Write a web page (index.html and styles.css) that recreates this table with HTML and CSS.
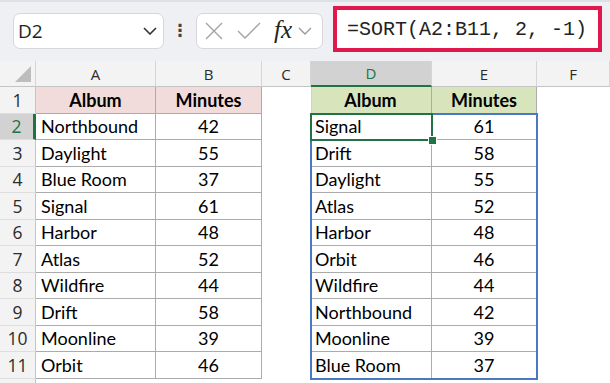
FILE: index.html
```html
<!DOCTYPE html>
<html>
<head>
<meta charset="utf-8">
<link rel="stylesheet" href="styles.css">
</head>
<body>
<div class="app">
  <div class="toolbar">
    <div class="namebox">
      <span class="nb-text">D2</span>
      <svg class="chev" width="14" height="8" viewBox="0 0 14 8"><polyline points="1,1 7,7 13,1" fill="none" stroke="#333" stroke-width="1.6"/></svg>
    </div>
    <div class="sep">⋮</div>
    <div class="fxbox">
      <svg class="ico" width="20" height="20" viewBox="0 0 20 20"><path d="M2 2 L18 18 M18 2 L2 18" stroke="#a3a3a3" stroke-width="1.4" fill="none"/></svg>
      <svg class="ico" width="24" height="20" viewBox="0 0 24 20"><polyline points="1,10 8,17 23,2" stroke="#a3a3a3" stroke-width="1.4" fill="none"/></svg>
      <span class="fx">fx</span>
      <svg class="chev2" width="14" height="8" viewBox="0 0 14 8"><polyline points="1,1 7,7 13,1" fill="none" stroke="#999" stroke-width="1.4"/></svg>
    </div>
    <div class="formula">=SORT(A2:B11, 2, -1)</div>
  </div>

  <div class="grid">
    <div class="ch corner"><span class="tri"></span></div>
    <div class="ch">A</div>
    <div class="ch">B</div>
    <div class="ch">C</div>
    <div class="ch sel">D</div>
    <div class="ch">E</div>
    <div class="ch">F</div>

    <div class="rh">1</div>
    <div class="c t hd pink">Album</div>
    <div class="c t hd pink">Minutes</div>
    <div class="c"></div>
    <div class="c t hd green dl">Album</div>
    <div class="c t hd green">Minutes</div>
    <div class="c"></div>

    <div class="rh sel">2</div>
    <div class="c t">Northbound</div>
    <div class="c t num">42</div>
    <div class="c"></div>
    <div class="c t dl">Signal</div>
    <div class="c t num">61</div>
    <div class="c"></div>

    <div class="rh">3</div>
    <div class="c t">Daylight</div>
    <div class="c t num">55</div>
    <div class="c"></div>
    <div class="c t dl">Drift</div>
    <div class="c t num">58</div>
    <div class="c"></div>

    <div class="rh">4</div>
    <div class="c t">Blue Room</div>
    <div class="c t num">37</div>
    <div class="c"></div>
    <div class="c t dl">Daylight</div>
    <div class="c t num">55</div>
    <div class="c"></div>

    <div class="rh">5</div>
    <div class="c t">Signal</div>
    <div class="c t num">61</div>
    <div class="c"></div>
    <div class="c t dl">Atlas</div>
    <div class="c t num">52</div>
    <div class="c"></div>

    <div class="rh">6</div>
    <div class="c t">Harbor</div>
    <div class="c t num">48</div>
    <div class="c"></div>
    <div class="c t dl">Harbor</div>
    <div class="c t num">48</div>
    <div class="c"></div>

    <div class="rh">7</div>
    <div class="c t">Atlas</div>
    <div class="c t num">52</div>
    <div class="c"></div>
    <div class="c t dl">Orbit</div>
    <div class="c t num">46</div>
    <div class="c"></div>

    <div class="rh">8</div>
    <div class="c t">Wildfire</div>
    <div class="c t num">44</div>
    <div class="c"></div>
    <div class="c t dl">Wildfire</div>
    <div class="c t num">44</div>
    <div class="c"></div>

    <div class="rh">9</div>
    <div class="c t">Drift</div>
    <div class="c t num">58</div>
    <div class="c"></div>
    <div class="c t dl">Northbound</div>
    <div class="c t num">42</div>
    <div class="c"></div>

    <div class="rh">10</div>
    <div class="c t">Moonline</div>
    <div class="c t num">39</div>
    <div class="c"></div>
    <div class="c t dl">Moonline</div>
    <div class="c t num">39</div>
    <div class="c"></div>

    <div class="rh">11</div>
    <div class="c t">Orbit</div>
    <div class="c t num">46</div>
    <div class="c"></div>
    <div class="c t dl">Blue Room</div>
    <div class="c t num">37</div>
    <div class="c"></div>

    <div class="rh last"></div>
    <div class="c rest"></div>

    <div class="spill"></div>
    <div class="active"><span class="handle"></span></div>
  </div>
</div>
</body>
</html>
```

FILE: styles.css
```css
html, body {
  margin: 0;
  padding: 0;
  background: #ffffff;
}
.app {
  width: 610px;
  height: 383px;
  overflow: hidden;
}
.toolbar {
  box-sizing: border-box;
  height: 61px;
  background: #eef0f4;
  border-top: 2px solid #dde0e5;
  display: flex;
  align-items: flex-start;
  padding-left: 13px;
}
.namebox {
  box-sizing: border-box;
  margin-top: 11px;
  width: 151px;
  height: 36px;
  background: #fff;
  border: 1px solid #d5d7da;
  border-radius: 7px;
  display: flex;
  align-items: center;
  justify-content: space-between;
  padding: 0 6px 0 4px;
}
.nb-text {
  font-family: "Open Sans", "Noto Sans", sans-serif;
  font-size: 19px;
  color: #222;
}
.sep {
  width: 32px;
  margin-top: 17px;
  text-align: center;
  font-family: "DejaVu Sans", sans-serif;
  font-size: 17px;
  line-height: 22px;
  color: #444;
  font-weight: bold;
}
.fxbox {
  box-sizing: border-box;
  margin-top: 11px;
  width: 127px;
  height: 36px;
  background: #fff;
  border: 1px solid #d5d7da;
  border-radius: 7px;
  display: flex;
  align-items: center;
  padding-left: 7px;
}
.fxbox .ico {
  margin-right: 13px;
}
.fx {
  font-family: "Liberation Serif", "DejaVu Serif", serif;
  font-style: italic;
  font-size: 25px;
  color: #222;
  line-height: 1;
  margin-top: -3px;
}
.chev2 {
  margin-left: 6px;
}
.formula {
  box-sizing: border-box;
  margin-top: 4px;
  margin-left: 10px;
  width: 269px;
  height: 46px;
  background: #fff;
  border: 4px solid #e0184c;
  font-family: "Liberation Mono", "DejaVu Sans Mono", monospace;
  font-size: 20px;
  color: #222;
  display: flex;
  align-items: center;
  padding-left: 10px;
  white-space: pre;
}

.grid {
  position: relative;
  display: grid;
  grid-template-columns: 36px 120px 106px 49px 121px 105px 1fr;
  grid-template-rows: 26px repeat(11, 26.5px) 1fr;
  height: 322px;
  font-family: "Lato", "Open Sans", sans-serif;
}
.ch {
  box-sizing: border-box;
  background: #f3f3f3;
  border-right: 1px solid #d6d6d6;
  border-bottom: 1px solid #c4c4c4;
  display: flex;
  align-items: center;
  justify-content: center;
  font-family: "Open Sans", "Noto Sans", sans-serif;
  font-size: 15px;
  color: #2b2b2b;
}
.ch.sel {
  background: #d2d2d2;
  color: #217346;
  border-bottom: 2px solid #217346;
}
.corner {
  position: relative;
}
.tri {
  position: absolute;
  right: 4px;
  bottom: 4px;
  width: 16px;
  height: 16px;
  background: #bdbdbd;
  clip-path: polygon(100% 0, 100% 100%, 0 100%);
}
.rh {
  box-sizing: border-box;
  background: #f3f3f3;
  border-right: 1px solid #c4c4c4;
  border-bottom: 1px solid #dedede;
  display: flex;
  align-items: center;
  justify-content: center;
  font-family: "Open Sans", "Noto Sans", sans-serif;
  font-size: 17.5px;
  color: #2b2b2b;
}
.rh.sel {
  background: #d2d2d2;
  color: #217346;
  border-right: 3px solid #217346;
}
.rh.last {
  border-bottom: none;
}
.c {
  box-sizing: border-box;
  background: #fff;
  display: flex;
  align-items: center;
  padding: 0 5px;
  font-size: 18px;
  color: #000;
  white-space: nowrap;
}
.c.t {
  border-right: 1px solid #ababab;
  border-bottom: 1px solid #ababab;
}
.c.dl {
  border-left: 1px solid #ababab;
  padding-left: 3px;
}
.num {
  justify-content: center;
}
.hd {
  justify-content: center;
  font-weight: bold;
}
.pink {
  background: #f2dcdb;
}
.green {
  background: #d8e4bc;
}
.green.dl {
  border-left-color: #d0d0d0;
}
.rest {
  grid-column: 2 / 8;
}
.spill {
  position: absolute;
  grid-column: 5 / 7;
  grid-row: 3 / 13;
  top: -1px;
  left: -1px;
  right: -1px;
  bottom: -1px;
  border: 2px solid #4a78c2;
  pointer-events: none;
}
.active {
  position: absolute;
  grid-column: 5 / 6;
  grid-row: 3 / 4;
  top: -1px;
  left: -1px;
  right: -1px;
  bottom: -1px;
  border: 2px solid #217346;
  pointer-events: none;
}
.handle {
  position: absolute;
  right: -6px;
  bottom: -6px;
  width: 7px;
  height: 7px;
  background: #217346;
  border: 1px solid #fff;
}
```
